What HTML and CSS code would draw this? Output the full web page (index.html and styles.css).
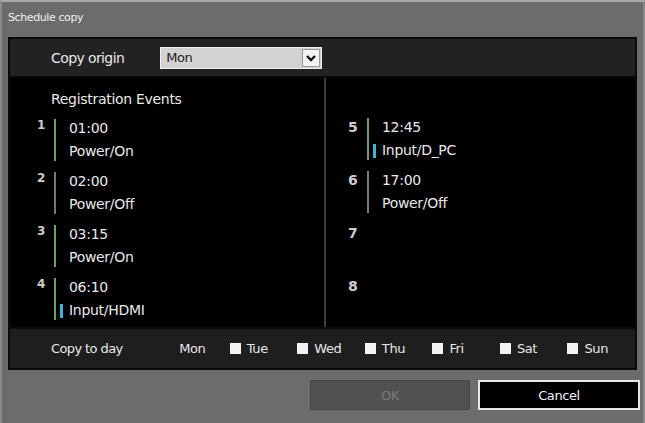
FILE: index.html
```html
<!DOCTYPE html>
<html lang="en">
<head>
    <meta charset="UTF-8">
    <title>Schedule copy</title>
    <link rel="stylesheet" href="styles.css">
</head>
<body>
    <div class="dialog">
        <div class="title">Schedule copy</div>
        <div class="panel">
            <div class="origin-row">
                <span class="label">Copy origin</span>
                <div class="select">
                    <span>Mon</span>
                    <span class="arrow">
                        <svg width="12" height="10" viewBox="0 0 12 10"><path d="M2 3 L6 7 L10 3" fill="none" stroke="#111" stroke-width="2.4"/></svg>
                    </span>
                </div>
            </div>
            <div class="events">
                <div class="col left">
                    <div class="heading">Registration Events</div>
                    <div class="event">
                        <span class="num">1</span>
                        <span class="bar on"></span>
                        <div class="txt"><div>01:00</div><div>Power/On</div></div>
                    </div>
                    <div class="event">
                        <span class="num">2</span>
                        <span class="bar off"></span>
                        <div class="txt"><div>02:00</div><div>Power/Off</div></div>
                    </div>
                    <div class="event">
                        <span class="num">3</span>
                        <span class="bar on"></span>
                        <div class="txt"><div>03:15</div><div>Power/On</div></div>
                    </div>
                    <div class="event">
                        <span class="num">4</span>
                        <span class="bar on"></span>
                        <div class="txt"><div>06:10</div><div class="input">Input/HDMI</div></div>
                    </div>
                </div>
                <div class="col right">
                    <div class="event">
                        <span class="num">5</span>
                        <span class="bar on"></span>
                        <div class="txt"><div>12:45</div><div class="input">Input/D_PC</div></div>
                    </div>
                    <div class="event">
                        <span class="num">6</span>
                        <span class="bar off"></span>
                        <div class="txt"><div>17:00</div><div>Power/Off</div></div>
                    </div>
                    <div class="event">
                        <span class="num">7</span>
                    </div>
                    <div class="event">
                        <span class="num">8</span>
                    </div>
                </div>
            </div>
            <div class="copy-row">
                <span class="label day-label">Copy to day</span>
                <span class="day first">Mon</span>
                <span class="day"><i class="box"></i>Tue</span>
                <span class="day"><i class="box"></i>Wed</span>
                <span class="day"><i class="box"></i>Thu</span>
                <span class="day"><i class="box"></i>Fri</span>
                <span class="day"><i class="box"></i>Sat</span>
                <span class="day"><i class="box"></i>Sun</span>
            </div>
        </div>
        <div class="footer">
            <button class="btn ok" disabled>OK</button>
            <button class="btn cancel">Cancel</button>
        </div>
    </div>
</body>
</html>
```

FILE: styles.css
```css
*{
    box-sizing: border-box;
}
body{
    margin: 0;
    background: #6c6c6c;
    font-family: "DejaVu Sans", "Liberation Sans", sans-serif;
    color: #e8e8e8;
}
.dialog{
    width: 645px;
    height: 423px;
    background: #6c6c6c;
    border-top: 2px solid #a8a8a8;
    border-left: 2px solid #8a8a8a;
    border-right: 2px solid #8a8a8a;
}
.title{
    height: 35px;
    padding-left: 6px;
    line-height: 31px;
    font-size: 11px;
    color: #f0f0f0;
    letter-spacing: -0.4px;
}
.panel{
    margin: 0 6px;
    border: 2px solid #0a0a0a;
    background: #000;
}
.origin-row{
    height: 39px;
    background: #222;
    display: flex;
    align-items: center;
    padding-left: 41px;
    border-bottom: 2px solid #0a0a0a;
}
.label{
    font-size: 14px;
    letter-spacing: -0.6px;
}
.select{
    margin-left: 36px;
    width: 162px;
    height: 22px;
    background: #d2d2d2;
    border: 1px solid #eee;
    display: flex;
    align-items: center;
    justify-content: space-between;
    padding-left: 5px;
    font-size: 13px;
    color: #222;
    letter-spacing: -0.4px;
}
.arrow{
    width: 18px;
    height: 18px;
    margin-right: 1px;
    background: #f4f4f4;
    border: 1px solid #999;
    display: flex;
    align-items: center;
    justify-content: center;
}
.events{
    height: 249px;
    display: flex;
}
.col{
    padding-top: 13px;
}
.col.left{
    width: 316px;
    border-right: 2px solid #3a3a3a;
    padding-left: 27px;
}
.col.right{
    flex: 1;
    padding-left: 22px;
    padding-top: 38px;
}
.heading{
    font-size: 14px;
    padding-left: 14px;
    height: 26px;
    letter-spacing: -0.3px;
}
.event{
    display: flex;
    height: 53px;
    font-size: 14px;
    letter-spacing: -0.3px;
}
.num{
    width: 17px;
    font-size: 12px;
    font-weight: bold;
    color: #ccc;
    padding-top: 1px;
}
.right .num{
    width: 19px;
    font-size: 14px;
    padding-top: 3px;
}
.bar{
    width: 2px;
    height: 42px;
    margin-top: 2px;
}
.bar.on{
    background: #6f9e70;
}
.bar.off{
    background: #777;
}
.txt{
    padding-left: 13px;
    line-height: 23px;
}
.input{
    position: relative;
}
.input::before{
    content: "";
    position: absolute;
    left: -9px;
    top: 5px;
    width: 3px;
    height: 14px;
    background: #39b6d9;
}
.copy-row{
    height: 41px;
    background: #1e1e1e;
    border-top: 2px solid #0a0a0a;
    display: flex;
    align-items: center;
    padding-left: 41px;
    font-size: 13px;
}
.day-label{
    width: 129px;
    font-size: 13px;
}
.day{
    width: 68px;
    display: flex;
    align-items: center;
    letter-spacing: -0.4px;
}
.day.first{
    width: 51px;
}
.box{
    width: 11px;
    height: 11px;
    background: #f2f2f2;
    margin-right: 6px;
}
.footer{
    display: flex;
    justify-content: flex-end;
    gap: 8px;
    padding-top: 10px;
    padding-right: 3px;
}
.btn{
    width: 160px;
    height: 30px;
    font-family: "DejaVu Sans", "Liberation Sans", sans-serif;
    font-size: 13px;
    letter-spacing: -0.4px;
}
.ok{
    background: #515151;
    border: 1px solid #474747;
    color: #7a7a7a;
}
.cancel{
    width: 162px;
    background: #000;
    border: 2px solid #e6e6e6;
    color: #f0f0f0;
}
```
